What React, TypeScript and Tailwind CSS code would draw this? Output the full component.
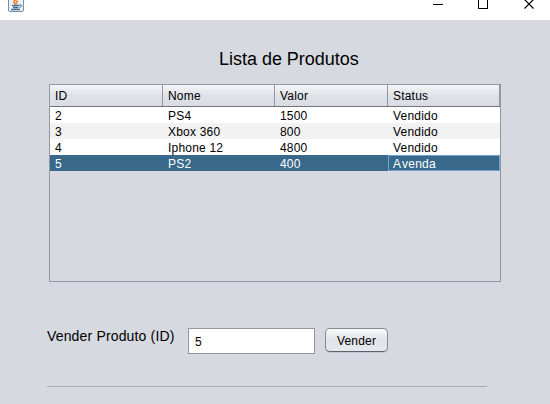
const products = [
  { id: "2", name: "PS4", value: "1500", status: "Vendido" },
  { id: "3", name: "Xbox 360", value: "800", status: "Vendido" },
  { id: "4", name: "Iphone 12", value: "4800", status: "Vendido" },
  { id: "5", name: "PS2", value: "400", status: "A venda" },
];

const columns = ["ID", "Nome", "Valor", "Status"];
const grid = "grid grid-cols-[113px_112px_113px_112px]";

function JavaIcon() {
  return (
    <svg width="16" height="12" viewBox="0 0 16 12" className="ml-2 block">
      <path d="M.5 0V10Q.5 11.500 2 11.500H14Q15.500 11.500 15.500 10V0" fill="#eef2f6" stroke="#7590aa" />
      <path d="M9.500 -1Q4.500 1 6.500 3L7.500 4.500M10 1Q7.500 2 9 4" fill="none" stroke="#ee7d26" strokeWidth="1.6" />
      <path d="M4 5.500H11M5 7.500H10.500M3 9.500H12" fill="none" stroke="#456f96" strokeWidth="1.3" />
      <path d="M11 5H13.300V6.500L11.500 7.500" fill="none" stroke="#456f96" />
    </svg>
  );
}

function TitleBar() {
  return (
    <header className="flex h-5 items-start bg-white">
      <JavaIcon />
      <svg width="104" height="12" viewBox="0 0 104 12" className="ml-auto mr-[13px] block" fill="none" stroke="#000">
        <path d="M0 4.500H10M45.500 0V8.500H54.500V0" shapeRendering="crispEdges" />
        <path d="M91.500 -.5L100.500 8.500M100.500 -.5L91.500 8.500" strokeWidth="1.2" />
      </svg>
    </header>
  );
}

function ProductTable() {
  return (
    <section className="ml-[49px] mt-[13px] h-[198px] w-[452px] border border-[#9297a1] text-[12px] leading-4 tracking-[0.2px]">
      <div className={`${grid} h-[22px] border-b border-[#707580] bg-linear-to-b from-[#f4f5f8] via-[#dfe2e8] to-[#d9dce3]`}>
        {columns.map((column) => (
          <div key={column} className="border-r border-[#9297a1] pl-[5px] pt-[3px]">{column}</div>
        ))}
      </div>
      {products.map((product) => {
        const selected = product.id === "5";
        return (
          <div key={product.id} className={`${grid} h-4 leading-[18px] ${selected ? "bg-[#39698a] text-white" : "even:bg-white odd:bg-[#f2f2f2]"}`}>
            <span className="pl-[5px]">{product.id}</span>
            <span className="pl-[5px]">{product.name}</span>
            <span className="pl-[5px]">{product.value}</span>
            <span className={selected ? "h-4 border border-[#73a4d1] pl-1 leading-4 tracking-[0.2px] [word-spacing:-2px]" : "pl-[5px]"}>{product.status}</span>
          </div>
        );
      })}
    </section>
  );
}

export default function App() {
  return (
    <div className="h-[404px] w-[550px] overflow-hidden bg-[#d6d9df] font-['Liberation_Sans',Arial,sans-serif] text-black">
      <TitleBar />
      <main>
        <h1 className="ml-[219px] mt-[27px] h-6 text-[18px] leading-6 tracking-[-0.02px] whitespace-nowrap">Lista de Produtos</h1>
        <ProductTable />
        <div className="ml-[47px] mt-[45px] flex">
          <label htmlFor="product-id" className="w-[141px] text-[14px] leading-[18px] tracking-[0.16px] whitespace-nowrap">Vender Produto (ID)</label>
          <input id="product-id" defaultValue="5" className="mt-px h-[26px] w-[127px] border border-[#9297a1] bg-white px-[6px] pt-[2px] text-[12px] outline-none" />
          <button className="ml-[10px] mt-px h-6 w-[63px] rounded-[5px] border border-[#858a93] border-b-[#5c616b] bg-linear-to-b from-[#fafbfc] via-[#dfe2e7] to-[#e7e9ed] pt-px text-[12px] leading-[22px] tracking-[0.2px] shadow-[0_1px_0_#c2c6ce]">Vender</button>
        </div>
        <hr className="ml-[47px] mt-8 w-[440px] border-t border-[#a9acb2]" />
      </main>
    </div>
  );
}
